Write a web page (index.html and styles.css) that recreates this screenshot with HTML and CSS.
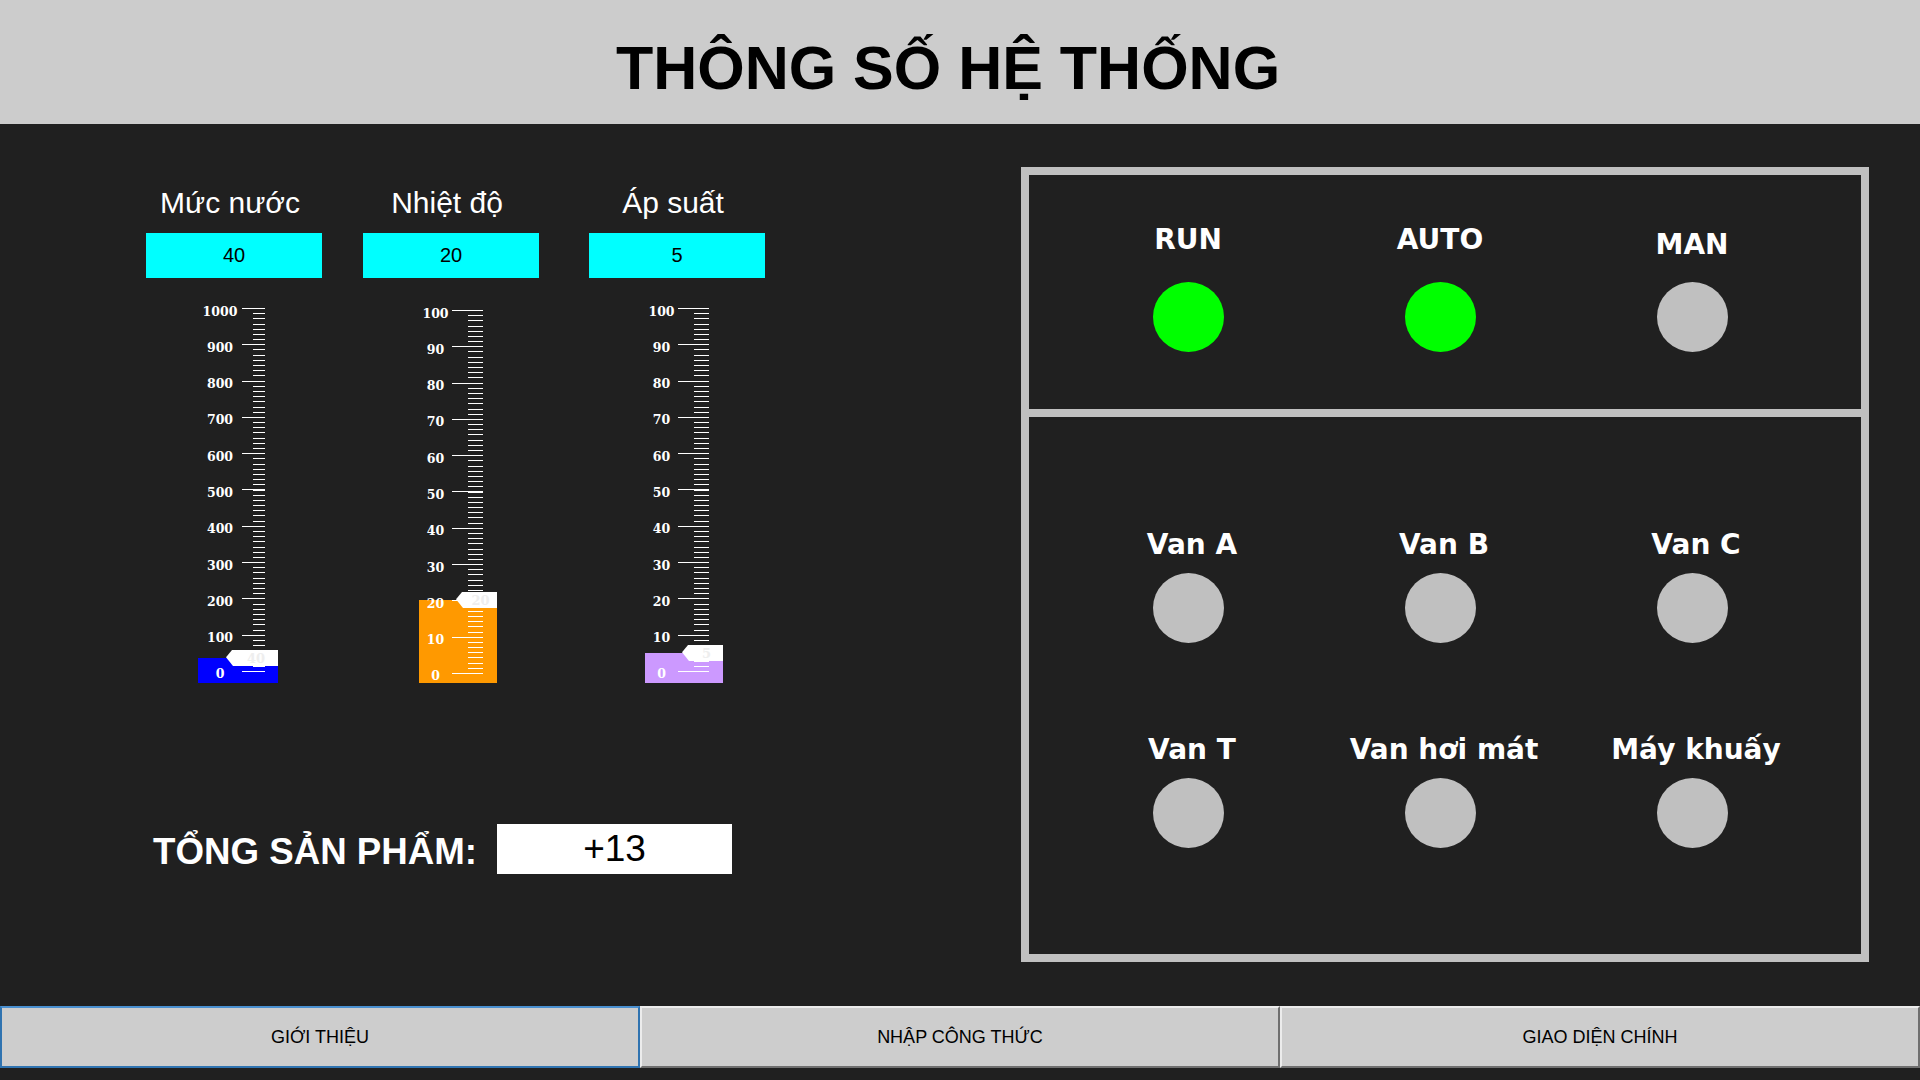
FILE: index.html
```html
<!DOCTYPE html>
<html lang="vi">
<head>
<meta charset="utf-8">
<title>Thông số hệ thống</title>
<link rel="stylesheet" href="styles.css">
</head>
<body>
<header class="header">
  <h1 class="title">THÔNG SỐ HỆ THỐNG</h1>
</header>
<main class="main">
  <section class="left">
    <div class="gauges">
      <div class="gauge">
        <div class="gauge-label">Mức nước</div>
        <div class="gauge-value">40</div>
        <div class="scale scale-wide">
          <div class="bar bar-blue" style="height:25px"></div>
          <div class="scale-labels">
            <span>1000</span><span>900</span><span>800</span><span>700</span><span>600</span><span>500</span><span>400</span><span>300</span><span>200</span><span>100</span><span>0</span>
          </div>
          <div class="ticks"></div>
          <div class="pointer" style="bottom:17px">40</div>
        </div>
      </div>
      <div class="gauge">
        <div class="gauge-label">Nhiệt độ</div>
        <div class="gauge-value">20</div>
        <div class="scale scale-narrow scale-mid">
          <div class="bar bar-orange" style="height:83px"></div>
          <div class="scale-labels">
            <span>100</span><span>90</span><span>80</span><span>70</span><span>60</span><span>50</span><span>40</span><span>30</span><span>20</span><span>10</span><span>0</span>
          </div>
          <div class="ticks"></div>
          <div class="pointer" style="bottom:75px">20</div>
        </div>
      </div>
      <div class="gauge">
        <div class="gauge-label">Áp suất</div>
        <div class="gauge-value">5</div>
        <div class="scale scale-narrow">
          <div class="bar bar-purple" style="height:30px"></div>
          <div class="scale-labels">
            <span>100</span><span>90</span><span>80</span><span>70</span><span>60</span><span>50</span><span>40</span><span>30</span><span>20</span><span>10</span><span>0</span>
          </div>
          <div class="ticks"></div>
          <div class="pointer" style="bottom:22px">5</div>
        </div>
      </div>
    </div>
    <div class="total">
      <span class="total-label">TỔNG SẢN PHẨM:</span>
      <span class="total-value">+13</span>
    </div>
  </section>
  <section class="panel">
    <div class="panel-top">
      <div class="ind"><div class="ind-label">RUN</div><div class="lamp lamp-on"></div></div>
      <div class="ind"><div class="ind-label">AUTO</div><div class="lamp lamp-on"></div></div>
      <div class="ind"><div class="ind-label ind-label-low">MAN</div><div class="lamp"></div></div>
    </div>
    <div class="panel-bottom">
      <div class="ind ind-row"><div class="ind-label">Van A</div><div class="lamp"></div></div>
      <div class="ind ind-row"><div class="ind-label">Van B</div><div class="lamp"></div></div>
      <div class="ind ind-row"><div class="ind-label">Van C</div><div class="lamp"></div></div>
      <div class="ind ind-row"><div class="ind-label">Van T</div><div class="lamp"></div></div>
      <div class="ind ind-row"><div class="ind-label">Van hơi mát</div><div class="lamp"></div></div>
      <div class="ind ind-row"><div class="ind-label">Máy khuấy</div><div class="lamp"></div></div>
    </div>
  </section>
</main>
<footer class="footer">
  <button class="nav-btn nav-btn-active">GIỚI THIỆU</button>
  <button class="nav-btn">NHẬP CÔNG THỨC</button>
  <button class="nav-btn">GIAO DIỆN CHÍNH</button>
</footer>
</body>
</html>
```
FILE: styles.css
```css
html, body {
  margin: 0;
  padding: 0;
}
body {
  width: 1920px;
  height: 1080px;
  overflow: hidden;
  background: #202020;
  font-family: "Liberation Sans", Arial, sans-serif;
  color: #fff;
}

/* header */
.header {
  height: 124px;
  box-sizing: border-box;
  padding: 38px 24px 0 0;
  background: #cccccc;
  text-align: center;
}
.title {
  margin: 0;
  font-family: "Liberation Sans", Arial, sans-serif;
  font-weight: bold;
  font-size: 61px;
  line-height: 1;
  color: #000;
}

/* main */
.main {
  display: flex;
  height: 882px;
  box-sizing: border-box;
  padding: 43px 51px 0 146px;
}
.left {
  flex: 1;
  padding-top: 18px;
}
.gauges {
  display: grid;
  grid-template-columns: 217px 226px 176px;
}
.gauge {
  width: 176px;
}
.gauge-label {
  font-size: 30px;
  line-height: 36px;
  text-align: center;
  padding-right: 8px;
  margin-bottom: 12px;
}
.gauge-value {
  height: 45px;
  background: #00ffff;
  color: #000;
  font-size: 20px;
  display: flex;
  align-items: center;
  justify-content: center;
}

/* scale */
.scale {
  position: relative;
  display: flex;
  align-items: flex-start;
  height: 375px;
  margin-top: 30px;
}
.scale-mid {
  margin-top: 32px;
  height: 373px;
}
.scale-wide {
  width: 80px;
  margin-left: 52px;
}
.scale-narrow {
  width: 78px;
  margin-left: 56px;
}
.scale-labels {
  position: relative;
  top: 3px;
  z-index: 2;
  display: flex;
  flex-direction: column;
  justify-content: space-between;
  height: 363px;
  font-family: "DejaVu Serif", serif;
  font-weight: bold;
  font-size: 12.5px;
  color: #fff;
}
.scale-wide .scale-labels { width: 44px; }
.scale-narrow .scale-labels { width: 33px; }
.scale-labels span {
  display: flex;
  height: 0;
  align-items: center;
  justify-content: center;
}
.ticks {
  position: relative;
  z-index: 2;
  height: 364px;
  background-image:
    repeating-linear-gradient(to bottom, #fff 0, #fff 1px, transparent 1px, transparent 36.3px),
    repeating-linear-gradient(to bottom, #fff 0, #fff 1px, transparent 1px, transparent 5.186px);
  background-repeat: no-repeat;
  background-position: left top, right top;
}
.scale-wide .ticks {
  width: 23px;
  background-size: 100% 100%, 12px 100%;
}
.scale-narrow .ticks {
  width: 31px;
  background-size: 100% 100%, 15px 100%;
}
.bar {
  position: absolute;
  left: 0;
  right: 0;
  bottom: 0;
  z-index: 1;
}
.bar-blue { background: #0000ff; }
.bar-orange { background: #ff9900; }
.bar-purple { background: #cc99ff; }
.pointer {
  position: absolute;
  right: 0;
  z-index: 3;
  height: 16px;
  box-sizing: border-box;
  padding-left: 8px;
  background: #fff;
  clip-path: polygon(0 45%, 6px 0, 100% 0, 100% 100%, 7px 100%);
  color: #eeeeee;
  font-family: "DejaVu Serif", serif;
  font-weight: bold;
  font-size: 13px;
  display: flex;
  align-items: center;
  justify-content: center;
}
.scale-wide .pointer { width: 52px; }
.scale-narrow .pointer { width: 41px; }

/* total */
.total {
  display: flex;
  align-items: center;
  gap: 20px;
  margin-top: 141px;
  margin-left: 7px;
}
.total-label {
  font-weight: bold;
  font-size: 36.7px;
  color: #fff;
  position: relative;
  top: 3px;
}
.total-value {
  width: 235px;
  height: 50px;
  background: #fff;
  color: #000;
  font-size: 37px;
  display: flex;
  align-items: center;
  justify-content: center;
}

/* right panel */
.panel {
  width: 848px;
  height: 795px;
  box-sizing: border-box;
  border: 8px solid #c0c0c0;
  display: flex;
  flex-direction: column;
}
.panel-top {
  height: 242px;
  box-sizing: border-box;
  border-bottom: 8px solid #c0c0c0;
  display: grid;
  grid-template-columns: repeat(3, 252px);
  align-content: start;
  padding: 48px 0 0 33px;
}
.panel-bottom {
  flex: 1;
  display: grid;
  grid-template-columns: repeat(3, 252px);
  align-content: start;
  row-gap: 90px;
  padding: 111px 0 0 33px;
}
.ind {
  display: flex;
  flex-direction: column;
  align-items: center;
}
.ind-label {
  font-family: "DejaVu Sans", sans-serif;
  font-weight: bold;
  font-size: 28px;
  line-height: 34px;
  color: #fff;
  margin-bottom: 25px;
  white-space: nowrap;
}
.ind-label-low {
  margin-top: 5px;
  margin-bottom: 20px;
}
.ind-row .ind-label {
  margin-bottom: 11px;
  padding-left: 8px;
}
.lamp {
  width: 71px;
  height: 70px;
  border-radius: 50%;
  background: #c0c0c0;
}
.lamp-on {
  background: #00ff00;
}

/* footer */
.footer {
  display: flex;
  height: 62px;
}
.nav-btn {
  flex: 1;
  margin: 0;
  padding: 0;
  background: #cdcdcd;
  border: 2px solid;
  border-color: #ececec #6f6f6f #6f6f6f #ececec;
  font-family: "Liberation Sans", Arial, sans-serif;
  font-size: 18px;
  color: #000;
}
.nav-btn-active {
  border-color: #4a90d0 #2f73b0 #2f73b0 #2f73b0;
}
```
